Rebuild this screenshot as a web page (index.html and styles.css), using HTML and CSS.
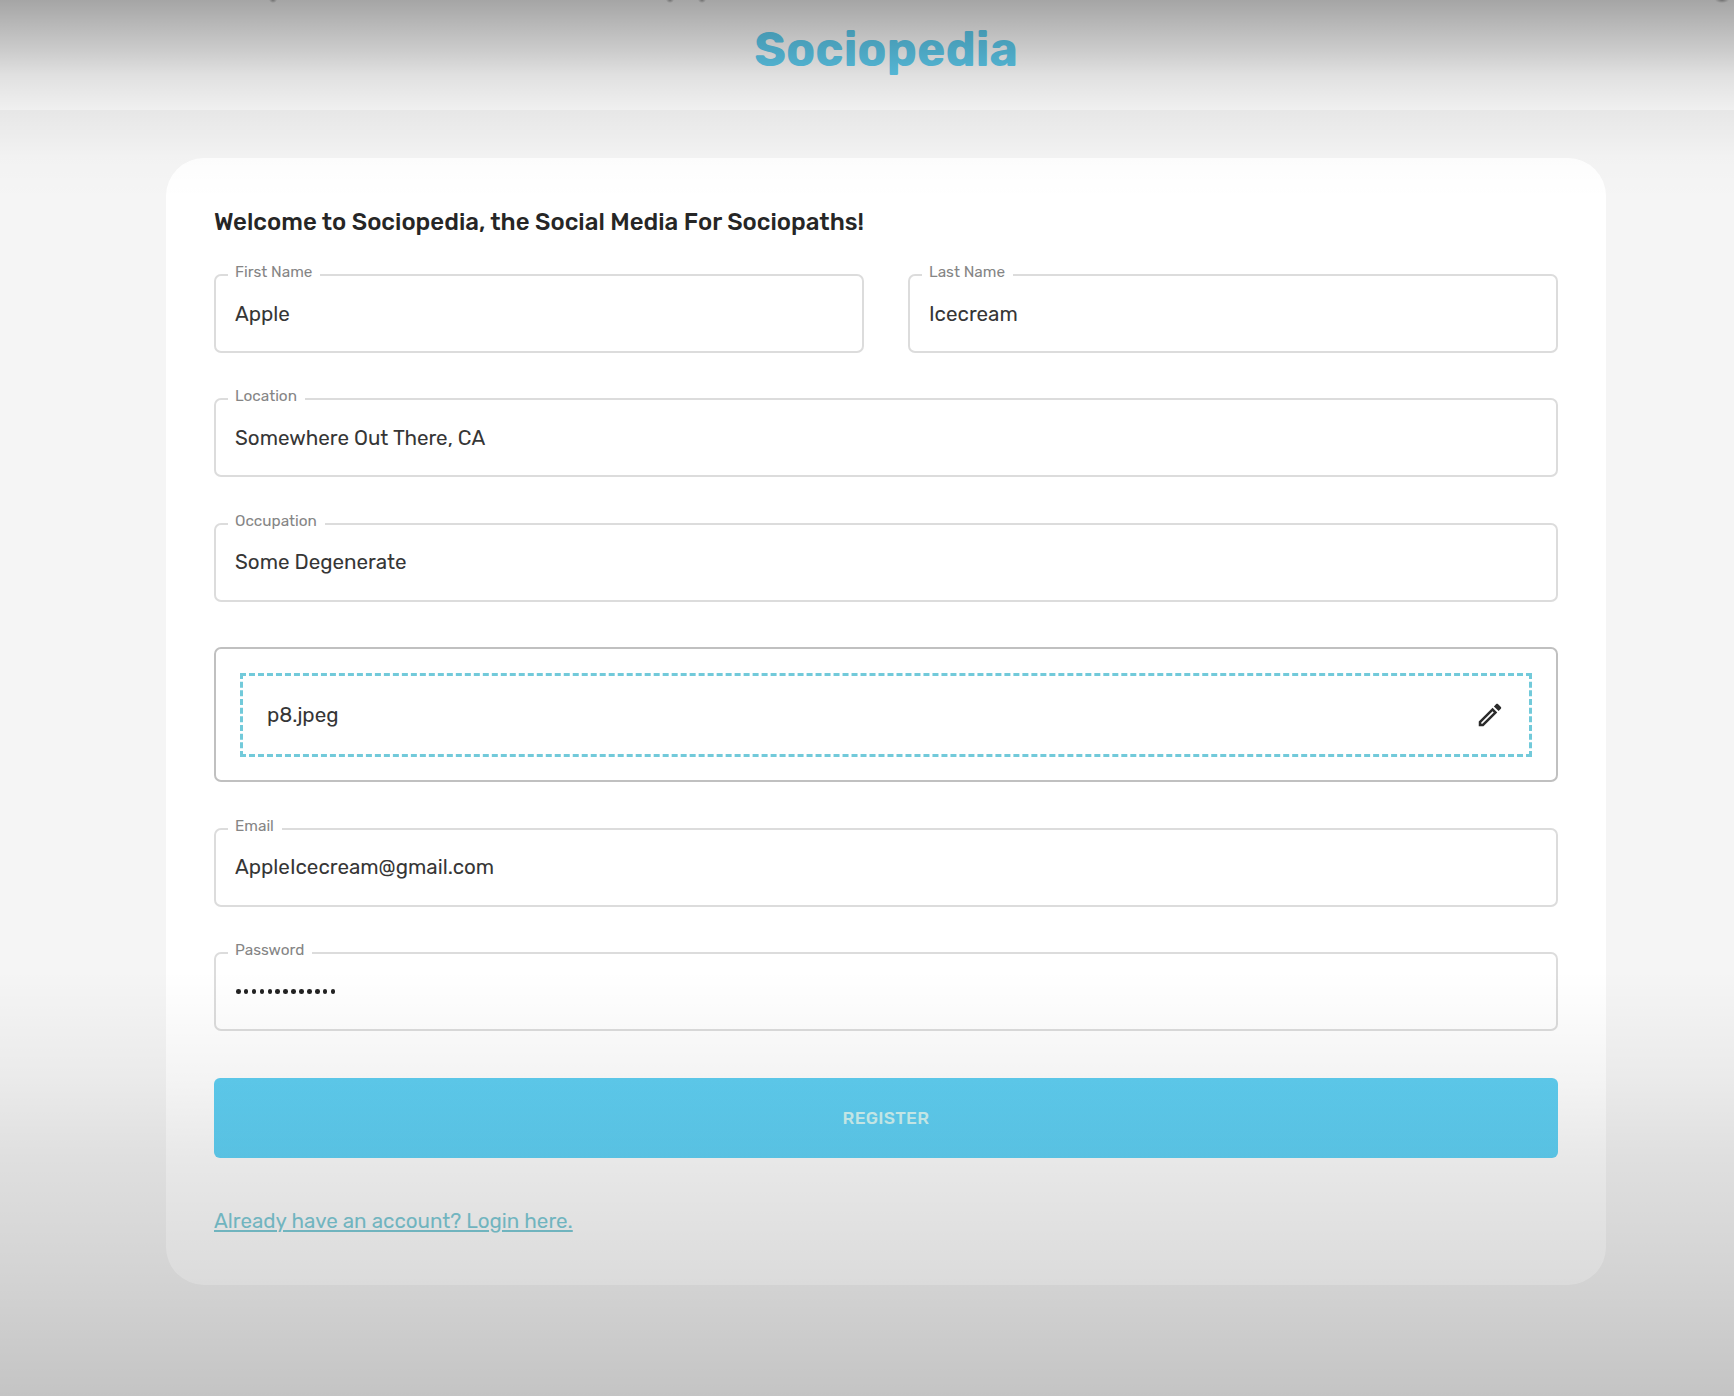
FILE: index.html
```html
<!DOCTYPE html>
<html lang="en">
<head>
<meta charset="utf-8">
<title>Sociopedia</title>
<link rel="stylesheet" href="styles.css">
</head>
<body>
<header class="header"><h1 class="logo">Sociopedia</h1></header>
<main class="card">
  <h2 class="welcome">Welcome to Sociopedia, the Social Media For Sociopaths!</h2>
  <form class="form">
    <div class="row">
      <div class="field"><label class="label">First Name</label><span class="value">Apple</span></div>
      <div class="field"><label class="label">Last Name</label><span class="value">Icecream</span></div>
    </div>
    <div class="field"><label class="label">Location</label><span class="value">Somewhere Out There, CA</span></div>
    <div class="field"><label class="label">Occupation</label><span class="value">Some Degenerate</span></div>
    <div class="upload">
      <div class="dropzone">
        <span class="value">p8.jpeg</span>
        <svg class="pencil" viewBox="0 0 24 24"><path d="m14.06 9.02.92.92L5.92 19H5v-.92l9.06-9.06M17.66 3c-.25 0-.51.1-.7.29l-1.83 1.83 3.75 3.75 1.83-1.83c.39-.39.39-1.02 0-1.41l-2.34-2.34c-.2-.2-.45-.29-.71-.29zm-3.6 3.19L3 17.25V21h3.75L17.81 9.94l-3.75-3.75z"/></svg>
      </div>
    </div>
    <div class="field"><label class="label">Email</label><span class="value">AppleIcecream@gmail.com</span></div>
    <div class="field"><label class="label">Password</label><span class="dots"><i></i><i></i><i></i><i></i><i></i><i></i><i></i><i></i><i></i><i></i><i></i><i></i><i></i></span></div>
    <button class="register" type="button">REGISTER</button>
    <a class="login">Already have an account? Login here.</a>
  </form>
</main>
<div class="shade"></div>
</body>
</html>
```
FILE: styles.css
```css
* { box-sizing: border-box; }
body {
  margin: 0;
  height: 1396px;
  overflow: hidden;
  background: #f5f5f5;
  color: #363636;
  font-family: Rubik, Roboto, "Liberation Sans", sans-serif;
}
.header {
  height: 110px;
  padding: 0 0 10px 38px;
  display: flex;
  align-items: center;
  justify-content: center;
  background: #fff;
}
.logo {
  margin: 0;
  font-size: 48px;
  line-height: 56px;
  font-weight: 700;
  color: #5fcff2;
}
.card {
  width: 1440px;
  height: 1127px;
  margin: 48px 0 0 166px;
  padding: 48px;
  border-radius: 38px;
  background: #fff;
}
.welcome {
  margin: 0 0 36px;
  font-size: 24px;
  line-height: 32px;
  font-weight: 500;
  color: #262626;
  white-space: nowrap;
}
.form { display: flex; flex-direction: column; gap: 45.25px; }
.row { display: grid; grid-template-columns: 1fr 1fr; gap: 44px; }
.field {
  position: relative;
  height: 79px;
  padding: 0 19px;
  display: flex;
  align-items: center;
  border: 2px solid #dcdcdc;
  border-radius: 7px;
}
.label {
  position: absolute;
  left: 12px;
  top: -14px;
  padding: 0 8px 0 7px;
  background: #fff;
  font-size: 15.35px;
  line-height: 20px;
  color: #858585;
}
.value { font-size: 20.6px; line-height: 28px; }
.upload {
  height: 135.5px;
  padding: 24px;
  border: 2px solid #c0c0c0;
  border-radius: 7px;
}
.dropzone {
  height: 84px;
  padding: 0 24px;
  display: flex;
  align-items: center;
  justify-content: space-between;
  border: 3px dashed #72cada;
}
.pencil { width: 30px; height: 30px; fill: #2b2b2b; }
.dots { display: flex; gap: 3.3px; padding: 1px 0 0 1px; }
.dots i { width: 4.6px; height: 4.6px; border-radius: 50%; background: #222; }
.register {
  height: 80px;
  margin-top: 2px;
  border: 0;
  border-radius: 6px;
  background: linear-gradient(#5fcff2, #61d4f8);
  color: #d0f5f4;
  font: 500 17.5px/28px Rubik, Roboto, sans-serif;
  letter-spacing: .3px;
}
.login {
  align-self: flex-start;
  margin-top: 4px;
  font-size: 20.6px;
  line-height: 28px;
  color: #7fccd8;
  text-decoration: underline;
  text-decoration-thickness: 2px;
  text-underline-offset: 2px;
}
.shade {
  position: absolute;
  inset: 0;
  pointer-events: none;
  background:
    radial-gradient(ellipse 4px 3px at 273px 0, #0005, transparent),
    radial-gradient(ellipse 4px 3px at 670px 0, #0005, transparent),
    radial-gradient(ellipse 4px 3px at 702px 0, #0005, transparent),
    radial-gradient(ellipse 7px 3px at 1722px 0, #0005, transparent),
    linear-gradient(#0000005a 0, #00000034 50px, #0000001f 75px, #0000000f 110px, #00000003 158px, #0000 200px, #0000 970px, #0000000b 1078px, #00000017 1158px, #00000024 1284px, #00000033 1396px);
}
```
